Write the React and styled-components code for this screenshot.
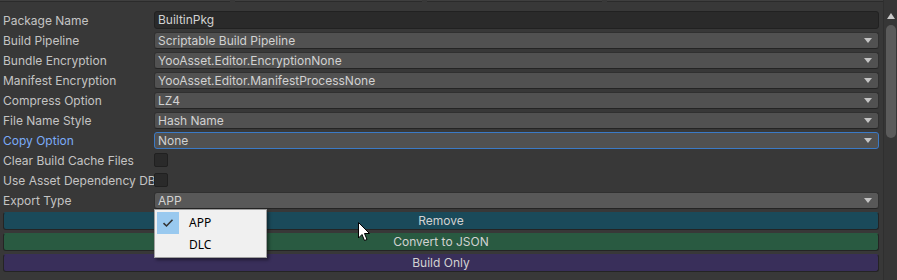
import React from "react";
import styled, { createGlobalStyle } from "styled-components";

const Global = createGlobalStyle`
  html, body { margin: 0; padding: 0; background: #383838; }
  body { font-family: Inter, "Noto Sans", sans-serif; font-size: 12px; overflow: hidden; }
`;

const Window = styled.div`
  position: relative;
  width: 897px;
  height: 280px;
  display: flex;
  background: #383838;
  overflow: hidden;
`;

const Content = styled.div`
  flex: 1;
  display: flex;
  flex-direction: column;
  padding: 0 4px 0 3px;
`;

const TabStrip = styled.div`
  display: flex;
  gap: 5px;
  height: 2px;
  margin: 0 -4px 9px -3px;
`;

const Tab = styled.div`
  width: ${(p) => p.$w}px;
  flex: ${(p) => (p.$grow ? 1 : "none")};
  background: #3f3f3f;
  border-bottom: 1px solid #2b2b2b;
`;

const Rows = styled.div`
  display: flex;
  flex-direction: column;
  gap: 2px;
`;

const Row = styled.div`
  display: flex;
  align-items: center;
  height: 18px;
`;

const Label = styled.div`
  width: 151px;
  flex: none;
  white-space: nowrap;
  overflow: hidden;
  color: ${(p) => (p.$focus ? "#7babf7" : "#c4c4c4")};
  font-size: 12px;
  line-height: 18px;
  padding-top: 1px;
`;

const TextField = styled.div`
  flex: 1;
  height: 18px;
  box-sizing: border-box;
  background: #2a2a2a;
  border: 1px solid #212121;
  border-radius: 3px;
  color: #d2d2d2;
  padding-left: 3px;
  line-height: 16px;
`;

const Popup = styled.div`
  flex: 1;
  height: 17px;
  box-sizing: border-box;
  background: ${(p) => (p.$light ? "#585858" : "#515151")};
  border: 1px solid ${(p) => (p.$focus ? "#3b7ac6" : "#303030")};
  border-bottom-color: ${(p) => (p.$focus ? "#3b7ac6" : "#242424")};
  border-radius: 3px;
  color: #d2d2d2;
  padding: 0 0 0 3px;
  line-height: 15px;
  display: flex;
  align-items: center;
  justify-content: space-between;
`;

const Arrow = styled.span`
  width: 0;
  height: 0;
  margin-right: 6px;
  border-left: 4px solid transparent;
  border-right: 4px solid transparent;
  border-top: 5px solid #c4c4c4;
`;

const Check = styled.div`
  width: 14px;
  height: 14px;
  box-sizing: border-box;
  background: #2a2a2a;
  border: 1px solid #202020;
  border-radius: 2px;
`;

const Buttons = styled.div`
  display: flex;
  flex-direction: column;
  gap: 3px;
  margin-top: 3px;
`;

const ActionButton = styled.div`
  height: 18px;
  box-sizing: border-box;
  border-radius: 3px;
  background: ${(p) => p.$bg};
  border: 1px solid #242424;
  border-top-color: ${(p) => p.$bg};
  color: #d2d2d2;
  text-align: center;
  line-height: 16px;
  font-size: 12px;
`;

const Scroller = styled.div`
  width: 14px;
  flex: none;
  background: #363636;
  border-left: 1px solid #2f2f2f;
  display: flex;
  flex-direction: column;
  align-items: center;
  padding-top: 13px;
  box-sizing: border-box;
`;

const UpArrow = styled.span`
  width: 0;
  height: 0;
  border-left: 4px solid transparent;
  border-right: 4px solid transparent;
  border-bottom: 6px solid #c8c8c8;
`;

const Thumb = styled.div`
  width: 10px;
  height: 113px;
  margin-top: 6px;
  background: #5b5b5b;
  border-radius: 5px;
`;

const Menu = styled.div`
  position: absolute;
  left: 154px;
  top: 209px;
  width: 113px;
  height: 49px;
  box-sizing: border-box;
  background: #f0f0f0;
  border: 1px solid #a0a0a0;
  box-shadow: 2px 2px 3px rgba(0, 0, 0, 0.45);
  padding: 2px;
  font-family: "Noto Sans", "Open Sans", sans-serif;
  font-size: 12px;
  color: #000;
`;

const MenuItem = styled.div`
  display: flex;
  align-items: center;
  height: 22px;
`;

const Gutter = styled.div`
  width: 22px;
  height: 22px;
  display: flex;
  align-items: center;
  justify-content: center;
  background: ${(p) => (p.$checked ? "#99c9ef" : "transparent")};
`;

const ItemText = styled.span`
  margin-left: 10px;
  line-height: 22px;
`;

const Cursor = styled.svg`
  position: absolute;
  left: 358px;
  top: 222px;
`;

const fields = [
  { label: "Package Name", value: "BuiltinPkg", kind: "text" },
  { label: "Build Pipeline", value: "Scriptable Build Pipeline", kind: "popup" },
  { label: "Bundle Encryption", value: "YooAsset.Editor.EncryptionNone", kind: "popup" },
  { label: "Manifest Encryption", value: "YooAsset.Editor.ManifestProcessNone", kind: "popup" },
  { label: "Compress Option", value: "LZ4", kind: "popup" },
  { label: "File Name Style", value: "Hash Name", kind: "popup" },
  { label: "Copy Option", value: "None", kind: "popup", focus: true },
  { label: "Clear Build Cache Files", kind: "check" },
  { label: "Use Asset Dependency DB", kind: "check" },
  { label: "Export Type", value: "APP", kind: "popup", light: true },
];

export default function App() {
  return (
    <Window>
      <Global />
      <Content>
        <TabStrip>
          <Tab $w={230} />
          <Tab $w={187} />
          <Tab $w={175} />
          <Tab $grow />
        </TabStrip>
        <Rows>
          {fields.map((f) => (
            <Row key={f.label}>
              <Label $focus={f.focus}>{f.label}</Label>
              {f.kind === "text" && <TextField>{f.value}</TextField>}
              {f.kind === "popup" && (
                <Popup $focus={f.focus} $light={f.light}>
                  <span>{f.value}</span>
                  <Arrow />
                </Popup>
              )}
              {f.kind === "check" && <Check />}
            </Row>
          ))}
        </Rows>
        <Buttons>
          <ActionButton $bg="#1a4a5a">Remove</ActionButton>
          <ActionButton $bg="#295a41">Convert to JSON</ActionButton>
          <ActionButton $bg="#392f5a">Build Only</ActionButton>
        </Buttons>
      </Content>
      <Scroller>
        <UpArrow />
        <Thumb />
      </Scroller>
      <Menu>
        <MenuItem>
          <Gutter $checked>
            <svg width="12" height="10" viewBox="0 0 12 10">
              <path d="M1.5 5.2 L4.5 8 L10.5 1.8" fill="none" stroke="#333" strokeWidth="1.6" />
            </svg>
          </Gutter>
          <ItemText>APP</ItemText>
        </MenuItem>
        <MenuItem>
          <Gutter />
          <ItemText>DLC</ItemText>
        </MenuItem>
      </Menu>
      <Cursor width="13" height="20" viewBox="0 0 13 20">
        <path d="M0.5 0.5 L0.5 16 L4 12.5 L6.5 18.5 L9 17.5 L6.5 11.5 L11.5 11.5 Z" fill="#fff" stroke="#000" strokeWidth="1" />
      </Cursor>
    </Window>
  );
}
